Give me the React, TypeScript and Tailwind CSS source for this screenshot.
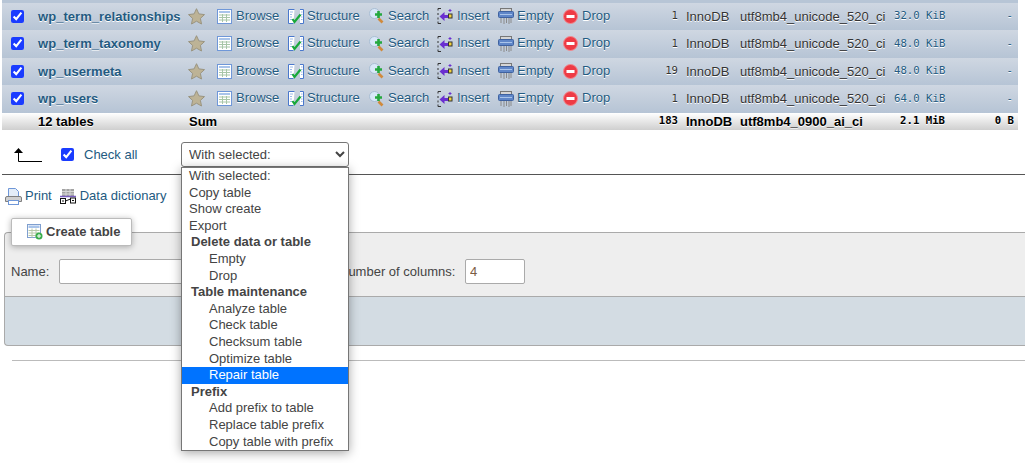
const font = "[font-family:'Liberation_Sans',Arial,sans-serif]";

const rows = [
  { name: "wp_term_relationships", count: "1", size: "32.0" },
  { name: "wp_term_taxonomy", count: "1", size: "48.0" },
  { name: "wp_usermeta", count: "19", size: "48.0" },
  { name: "wp_users", count: "1", size: "64.0" },
];

const options = [
  { label: "With selected:" },
  { label: "Copy table" },
  { label: "Show create" },
  { label: "Export" },
  { label: "Delete data or table", group: true },
  { label: "Empty", sub: true },
  { label: "Drop", sub: true },
  { label: "Table maintenance", group: true },
  { label: "Analyze table", sub: true },
  { label: "Check table", sub: true },
  { label: "Checksum table", sub: true },
  { label: "Optimize table", sub: true },
  { label: "Repair table", sub: true, active: true },
  { label: "Prefix", group: true },
  { label: "Add prefix to table", sub: true },
  { label: "Replace table prefix", sub: true },
  { label: "Copy table with prefix", sub: true },
];

/* Toolbar icons */
const StarIcon = () => (
  <svg width="17" height="17" viewBox="0 0 17 17">
    <path d="M8.5 .7l2.4 5.2 5.6.7-4.1 3.8 1.1 5.6-5-2.8-5 2.8 1.1-5.6L.5 6.6l5.6-.7z" fill="#bdb396" stroke="#9a9480" strokeWidth="1" />
  </svg>
);

const BrowseIcon = () => (
  <svg width="15" height="15" viewBox="0 0 15 15">
    <rect x="0.5" y="0.5" width="14" height="14" fill="#fff" stroke="#6f97d8" />
    <rect x="2" y="2" width="11" height="2" fill="#a9c4ea" />
    <path d="M2 6h11M2 8.5h11M2 11h11M5.5 5v8M9.5 5v8" stroke="#a8c6a8" strokeWidth="1" />
  </svg>
);

const StructureIcon = () => (
  <svg width="16" height="15" viewBox="0 0 16 15">
    <path d="M6.5 .5H.5v14h5" fill="#fff" stroke="#4a78cc" />
    <path d="M2 3h3M2 5.5h2M2 8h2M2 10.5h2" stroke="#9dbce8" />
    <path d="M12 .5h3.5v14H12" fill="#fff" stroke="#4a78cc" />
    <path d="M13 3h1.500M13 5.500h1.500M13 8h1.500M13 10.500h1.500" stroke="#9dbce8" />
    <path d="M4.500 10l2 3 6-7.500" fill="none" stroke="#18a83a" strokeWidth="2.200" />
  </svg>
);

const SearchIcon = () => (
  <svg width="16" height="16" viewBox="0 0 16 16">
    <circle cx="5.500" cy="5.500" r="5" fill="#d8e8f8" stroke="#a9bdd2" />
    <path d="M9.500 10.500l4 4" stroke="#d08a3c" strokeWidth="2.600" />
    <path d="M6 6.500h7M9.500 3v7" stroke="#25a83e" strokeWidth="2.600" />
  </svg>
);

const InsertIcon = () => (
  <svg width="16" height="16" viewBox="0 0 16 16">
    <path d="M4 .5H1v2M1 5v2M1 9.500v2M1 13.500v2h3" fill="none" stroke="#333" />
    <path d="M2.500 8.500l5-4.500v3h3.500v3H7.500v3z" fill="#6a2fd0" />
    <rect x="11.500" y="6" width="3.500" height="4" fill="#f4d23a" stroke="#333" />
    <path d="M13 1v3M11.500 2.500h3" stroke="#6a2fd0" />
  </svg>
);

const EmptyIcon = () => (
  <svg width="16" height="16" viewBox="0 0 16 16">
    <rect x="2.500" y="0.500" width="11" height="3" fill="#d5d5d5" stroke="#777" />
    <rect x="0.500" y="3.500" width="15" height="6" rx="1" fill="#5f86c8" stroke="#3f62a0" />
    <path d="M2 6.500h12" stroke="#a9c4ea" />
    <path d="M3 10v5M6 10v6M8.500 10v5M11 10v6M13 10v5" stroke="#8a8a8a" />
  </svg>
);

const DropIcon = () => (
  <svg width="15" height="15" viewBox="0 0 15 15">
    <circle cx="7.500" cy="7.500" r="7" fill="#ee3b45" stroke="#f08a90" />
    <rect x="3.500" y="6" width="8" height="3" fill="#fff" />
  </svg>
);

const PrintIcon = () => (
  <svg width="17" height="17" viewBox="0 0 17 17">
    <path d="M3.500 .5h7l3 3v6h-10z" fill="#e4edf8" stroke="#6f97d8" />
    <path d="M2 8.500h13a1.500 1.500 0 0 1 1.500 1.500v3.500H.500V10A1.500 1.500 0 0 1 2 8.500z" fill="#d0d0d0" stroke="#808080" />
    <rect x="3.500" y="12.500" width="10" height="4" fill="#fff" stroke="#6f97d8" />
  </svg>
);

const DictionaryIcon = () => (
  <svg width="16" height="16" viewBox="0 0 16 16">
    <rect x="2" y="1" width="12" height="8" fill="#a3a3a3" />
    <path d="M2 3.500h12M2 6h12M6 1v8M10 1v8" stroke="#d8d8d8" />
    <path d="M0 8.500h16" stroke="#7a5fc0" strokeWidth="1.500" />
    <rect x="0.500" y="10.500" width="5" height="5" fill="#fff" stroke="#111" />
    <rect x="10.500" y="10" width="5" height="5" fill="#fff" stroke="#111" />
    <path d="M5.500 13l5-2M2 13h2M12 12.500h2" stroke="#111" />
  </svg>
);

const CreateTableIcon = () => (
  <svg width="16" height="16" viewBox="0 0 16 16">
    <rect x="0.500" y="0.500" width="13" height="13" fill="#fff" stroke="#7f9fcf" />
    <rect x="1.500" y="1.500" width="11" height="2.500" fill="#a9c4ea" />
    <path d="M1.500 6.500h11M1.500 9h11M1.500 11.500h11M5 4.500v9M9 4.500v9" stroke="#b6c8a8" />
    <circle cx="12" cy="12" r="3.500" fill="#3aae4c" />
    <path d="M10 12h4M12 10v4" stroke="#fff" />
  </svg>
);

const BackArrow = () => (
  <svg width="28" height="15" viewBox="0 0 28 15">
    <path d="M0 6l4.500-5L9 6z" fill="#000" />
    <path d="M4.500 5v9.500H28" fill="none" stroke="#000" />
  </svg>
);

function Action({ icon, label, width, gap = "w-[19px]" }: { icon: React.ReactNode; label: string; width: string; gap?: string }) {
  return (
    <div className={`flex items-center ${width}`}>
      <span className={`${gap} shrink-0 flex items-center`}>{icon}</span>
      <span className="-mt-[2px]">{label}</span>
    </div>
  );
}

export default function App() {
  return (
    <div className={`w-[1025px] h-[463px] overflow-hidden relative bg-white text-[13px] text-[#444] ${font}`}>
      {/* Table rows */}
      <div className="h-[2.5px] ml-[2px] mr-[7px] bg-[#b7c5d6]" />
      {rows.map((r) => (
        <div
          key={r.name}
          className="flex items-center h-[27.5px] ml-[2px] mr-[7px] bg-gradient-to-b from-[#cfd7e2] to-[#b6c4d5] text-[#235a81] [text-shadow:0_1px_0_#fff]"
        >
          <div className="w-[36px] pl-[9px] flex items-center">
            <input type="checkbox" checked readOnly className="accent-[#1a3cff] m-0" />
          </div>
          <div className="w-[151px] font-bold whitespace-nowrap tracking-[0.05px]">{r.name}</div>
          <div className="w-[28px] -ml-px mr-px flex items-center"><StarIcon /></div>
          <Action icon={<BrowseIcon />} label="Browse" width="w-[71px]" />
          <Action icon={<StructureIcon />} label="Structure" width="w-[81px]" />
          <Action icon={<SearchIcon />} label="Search" width="w-[68px]" />
          <Action icon={<InsertIcon />} label="Insert" width="w-[61px]" gap="w-[20px]" />
          <Action icon={<EmptyIcon />} label="Empty" width="w-[65px]" />
          <Action icon={<DropIcon />} label="Drop" width="w-[77px]" />
          <div className="w-[38px] text-right text-[#333] [font-family:'DejaVu_Sans_Mono',monospace] text-[10.67px]">{r.count}</div>
          <div className="w-[62px] pl-[8px] text-[#333]">InnoDB</div>
          <div className="w-[154px] text-[#333] whitespace-nowrap">utf8mb4_unicode_520_ci</div>
          <div className="w-[51px] text-right whitespace-nowrap [font-family:'DejaVu_Sans_Mono',monospace] text-[10.67px]">{r.size} KiB</div>
          <div className="w-[68px] text-right [font-family:'DejaVu_Sans_Mono',monospace] text-[10.67px]">-</div>
        </div>
      ))}

      {/* Sum row */}
      <div className="flex items-center h-[17.5px] ml-[2px] mr-[7px] bg-gradient-to-b from-[#ffffff] to-[#cfcfcf] font-bold text-black [text-shadow:0_1px_0_#fff]">
        <div className="w-[36px]" />
        <div className="w-[151px]">12 tables</div>
        <div className="w-[451px]">Sum</div>
        <div className="w-[38px] text-right [font-family:'DejaVu_Sans_Mono',monospace] text-[10.67px]">183</div>
        <div className="w-[62px] pl-[8px]">InnoDB</div>
        <div className="w-[154px] whitespace-nowrap">utf8mb4_0900_ai_ci</div>
        <div className="w-[51px] text-right whitespace-nowrap [font-family:'DejaVu_Sans_Mono',monospace] text-[10.67px]">2.1 MiB</div>
        <div className="w-[69px] text-right whitespace-nowrap [font-family:'DejaVu_Sans_Mono',monospace] text-[10.67px]">0 B</div>
      </div>

      {/* Check all bar */}
      <div className="flex items-center h-[25px] mt-[12px] pl-[14px]">
        <div className="w-[47px] flex items-center"><BackArrow /></div>
        <input type="checkbox" checked readOnly className="accent-[#1a3cff] m-0" />
        <span className="ml-[10px] w-[97px] text-[#235a81]">Check all</span>
        <select className="w-[168px] h-[25px] pl-[3px] bg-white border border-[#767676] rounded-[3px] text-[13px] text-[#444] appearance-auto">
          <option>With selected:</option>
        </select>
      </div>
      <div className="h-px mt-[7px] ml-[2px] bg-[#555]" />

      {/* Print links */}
      <div className="flex items-center h-[20px] mt-[11px] pl-[5px] text-[#235a81]">
        <PrintIcon />
        <span className="ml-[3px] mr-[8px]">Print</span>
        <DictionaryIcon />
        <span className="ml-[4px]">Data dictionary</span>
      </div>

      {/* Create table tab */}
      <div className="relative z-10 flex items-center w-[121px] h-[28px] mt-[12px] -mb-[14px] ml-[11px] pl-[15px] gap-[3px] bg-white border border-[#bbb] rounded-[2px] shadow-[0_1px_6px_rgba(0,0,0,0.3)] font-bold">
        <CreateTableIcon />
        <span>Create table</span>
      </div>

      {/* Create table form */}
      <div className="ml-[4px] border-t border-l border-[#aaa] rounded-tl-[4px] bg-[#eee] h-[65px] pt-[26px] pl-[6px] flex items-start border-b">
        <div className="flex items-center h-[25px]">
          <span className="w-[48px]">Name:</span>
          <input readOnly className="w-[240px] h-[25px] bg-white border border-[#aaa] rounded-[2px]" />
          <span className="ml-[40px] w-[126px] whitespace-nowrap">Number of columns:</span>
          <input readOnly value="4" className="w-[60px] h-[25px] px-[4px] bg-white border border-[#aaa] rounded-[2px] text-[13px] text-[#7a5c44]" />
        </div>
      </div>
      <div className="ml-[4px] h-[49px] border-l border-b border-[#aaa] rounded-bl-[4px] bg-[#d3dce3]" />

      <div className="h-px mt-[14px] ml-[12px] bg-[#bbb]" />

      {/* Open select list */}
      <div className="absolute z-20 left-[181px] top-[167px] w-[168px] border border-[#767676] bg-white shadow-[0_2px_10px_rgba(0,0,0,0.35)] text-[#444]">
        {options.map((o) => (
          <div
            key={o.label}
            className={`h-[16.6px] leading-[16.6px] whitespace-nowrap ${o.group ? "pl-[9px] font-bold" : o.sub ? "pl-[27px]" : "pl-[7px]"} ${o.active ? "bg-[#0073ff] text-white" : ""}`}
          >
            {o.label}
          </div>
        ))}
      </div>
    </div>
  );
}
